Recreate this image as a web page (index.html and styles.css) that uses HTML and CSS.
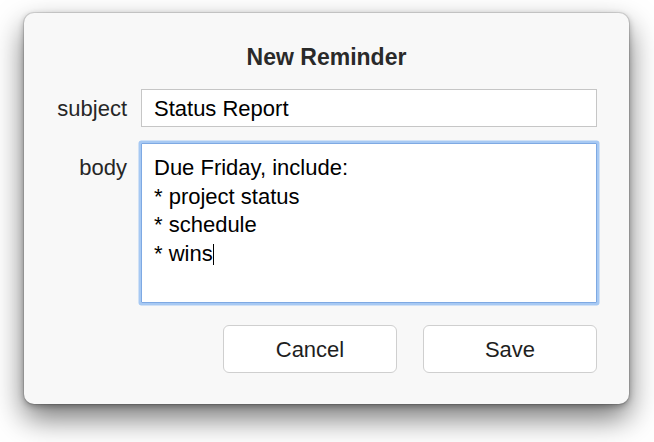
FILE: index.html
```html
<!DOCTYPE html>
<html>
<head>
<meta charset="utf-8">
<link rel="stylesheet" href="styles.css">
</head>
<body>
<div class="page">
  <div class="dialog">
    <div class="title">New Reminder</div>
    <div class="form">
      <div class="label">subject</div>
      <div class="input">Status Report</div>
      <div class="label">body</div>
      <div class="textarea">Due Friday, include:<br>* project status<br>* schedule<br>* wins<span class="caret"></span></div>
      <div class="buttons">
        <div class="btn">Cancel</div>
        <div class="btn">Save</div>
      </div>
    </div>
  </div>
</div>
</body>
</html>
```

FILE: styles.css
```css
html, body {
  margin: 0;
  padding: 0;
  background: #ffffff;
}
.page {
  padding: 13px 0 0 24px;
  min-height: 442px;
  box-sizing: border-box;
  font-family: "Liberation Sans", Arial, sans-serif;
}
.dialog {
  width: 605px;
  box-sizing: border-box;
  background: #f8f8f8;
  border-radius: 10px;
  padding: 31px 32px 31px 0;
  box-shadow: 0 0 0 1px rgba(0,0,0,0.1), 0 14px 30px rgba(0,0,0,0.55), 0 2px 6px rgba(0,0,0,0.3);
}
.title {
  font-size: 23px;
  font-weight: bold;
  line-height: 26px;
  color: #2a2a2a;
  text-align: center;
  padding-left: 32px;
}
.form {
  margin-top: 19px;
  display: grid;
  grid-template-columns: 103px 456px;
  column-gap: 14px;
  row-gap: 16px;
  align-items: baseline;
}
.label {
  font-size: 22px;
  color: #262626;
  text-align: right;
}
.input {
  height: 38px;
  box-sizing: border-box;
  border: 1px solid #c6c6c6;
  background: #fff;
  font-size: 22px;
  line-height: 34px;
  padding: 2px 12px 0;
  color: #000;
}
.textarea {
  height: 160px;
  box-sizing: border-box;
  border: 1px solid #7ea9e3;
  box-shadow: 0 0 0 2.5px #a7c9f3;
  border-radius: 1px;
  background: #fff;
  font-size: 22px;
  line-height: 28.5px;
  padding: 10px 12px 0;
  color: #000;
}
.caret {
  display: inline-block;
  width: 0;
  height: 21px;
  border-left: 1.5px solid #000;
  vertical-align: -4px;
}
.buttons {
  grid-column: 2;
  display: flex;
  justify-content: flex-end;
  gap: 26px;
  margin-top: 6px;
}
.btn {
  width: 174px;
  height: 48px;
  box-sizing: border-box;
  border: 1px solid #cfcfcf;
  border-radius: 6px;
  background: #fff;
  font-size: 22px;
  line-height: 46px;
  text-align: center;
  color: #1e1e1e;
  padding-top: 1px;
}
```
